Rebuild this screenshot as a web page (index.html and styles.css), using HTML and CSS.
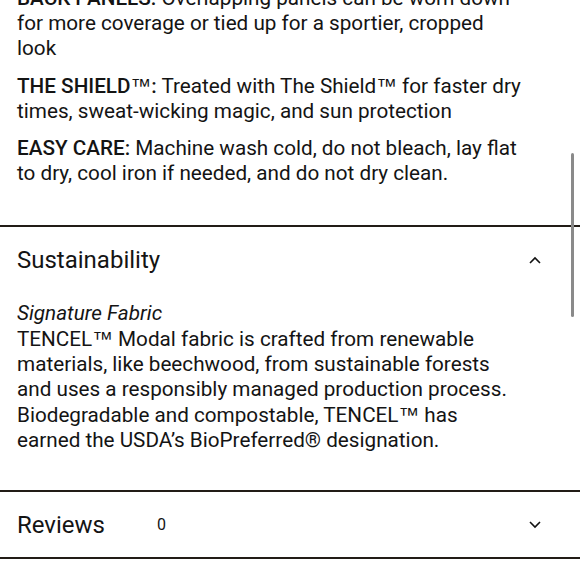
FILE: index.html
```html
<!DOCTYPE html>
<html lang="en">
<head>
<meta charset="utf-8">
<link rel="stylesheet" href="styles.css">
</head>
<body>
<div class="page">
  <div class="details">
    <p><strong>BACK PANELS:</strong> Overlapping panels can be worn down for more coverage or tied up for a sportier, cropped look</p>
    <p><strong>THE SHIELD<span class="tm">™</span>:</strong> Treated with The Shield<span class="tm">™</span> for faster dry times, sweat-wicking magic, and sun protection</p>
    <p><strong>EASY CARE:</strong> Machine wash cold, do not bleach, lay flat to dry, cool iron if needed, and do not dry clean.</p>
  </div>
  <section class="acc">
    <div class="acc-head">
      <span class="acc-title">Sustainability</span>
      <svg class="chev" width="12" height="8" viewBox="0 0 12 8"><path d="M1 7 L6 2 L11 7" fill="none" stroke="#111" stroke-width="1.6"/></svg>
    </div>
    <div class="acc-body">
      <em>Signature Fabric</em><br>
      TENCEL<span class="tm">™</span> Modal fabric is crafted from renewable materials, like beechwood, from sustainable forests and uses a responsibly managed production process. Biodegradable and compostable, TENCEL<span class="tm">™</span> has earned the USDA’s BioPreferred® designation.
    </div>
  </section>
  <section class="acc">
    <div class="acc-head">
      <span class="acc-title">Reviews <span class="count">0</span></span>
      <svg class="chev" width="12" height="8" viewBox="0 0 12 8"><path d="M1 1 L6 6 L11 1" fill="none" stroke="#111" stroke-width="1.6"/></svg>
    </div>
  </section>
</div>
<div class="scrollbar"></div>
</body>
</html>
```
FILE: styles.css
```css
html, body {
  margin: 0;
  padding: 0;
  background: #fff;
  overflow: hidden;
}
body {
  font-family: Roboto, "Liberation Sans", sans-serif;
  color: #141414;
  width: 580px;
  height: 580px;
}
.page {
  margin-top: -14px;
}
.details {
  padding: 0 58px 39px 17px;
  border-bottom: 2px solid #221c17;
}
.details p {
  margin: 0 0 12px;
  font-size: 20.7px;
  line-height: 25px;
}
.details p:last-child {
  margin-bottom: 0;
}
.details strong {
  font-weight: 500;
}
.tm {
  font-family: "Liberation Sans", Roboto, sans-serif;
}
.acc {
  border-bottom: 2px solid #221c17;
}
.acc-head {
  height: 65px;
  display: flex;
  align-items: center;
  justify-content: space-between;
  padding: 0 39px 0 17px;
}
.acc-title {
  font-size: 24px;
}
.count {
  font-size: 16px;
  margin-left: 46px;
  vertical-align: 3px;
}
.acc-body {
  padding: 9px 58px 37px 17px;
  font-size: 20.7px;
  line-height: 25px;
}
.scrollbar {
  position: fixed;
  right: 6px;
  top: 153px;
  width: 3px;
  height: 164px;
  background: #8a8a8a;
  border-radius: 2px;
}
```
